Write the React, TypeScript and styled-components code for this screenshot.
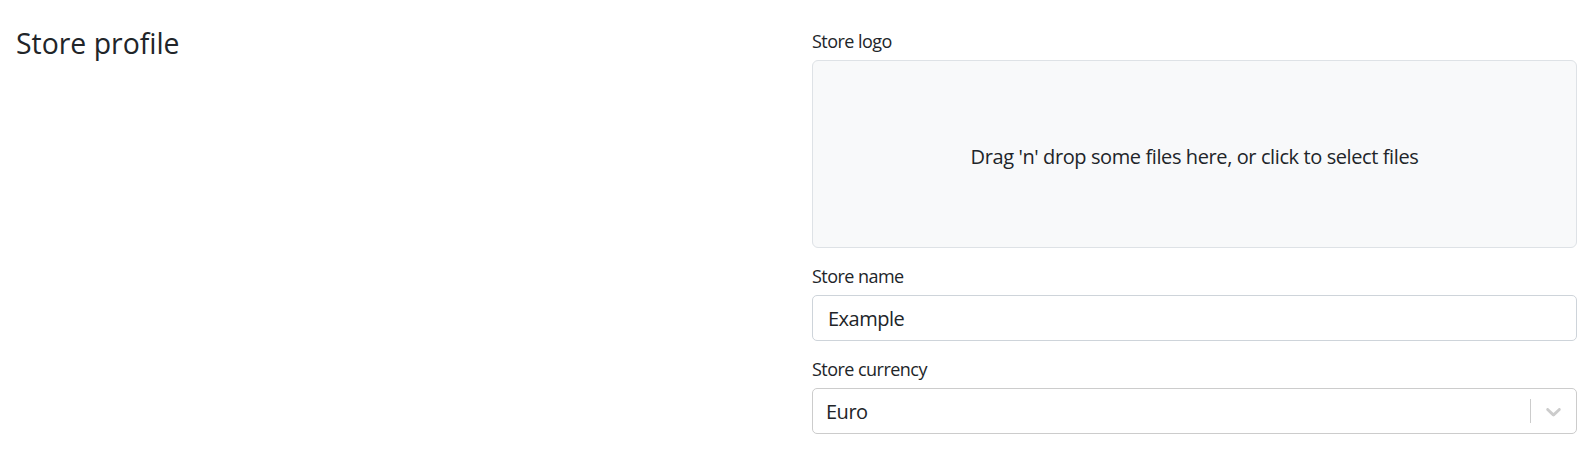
import React from "react";
import styled, { createGlobalStyle } from "styled-components";

const Global = createGlobalStyle`
  html, body { margin: 0; padding: 0; background: #fff; }
  body {
    font-family: "Open Sans", "Noto Sans", sans-serif;
    color: #212529;
    -webkit-font-smoothing: antialiased;
  }
`;

const Page = styled.div`
  display: grid;
  grid-template-columns: 1fr 1fr;
  column-gap: 31px;
  padding: 26px 10px 20px 16px;
`;

const Title = styled.h4`
  margin: 0;
  font-size: 28.4px;
  line-height: 34px;
  font-weight: 400;
`;

const Form = styled.div`
  display: flex;
  flex-direction: column;
  gap: 13px;
`;

const Group = styled.div`
  display: flex;
  flex-direction: column;
  gap: 4px;
`;

const Label = styled.label`
  font-size: 18px;
  line-height: 30px;
  letter-spacing: -0.03em;
`;

const Dropzone = styled.div`
  height: 188px;
  box-sizing: border-box;
  border: 1px solid #dee2e6;
  border-radius: 6px;
  background: #f8f9fa;
  display: flex;
  align-items: center;
  justify-content: center;
  font-size: 20px;
  letter-spacing: -0.02em;
  padding-top: 4px;
  cursor: pointer;
`;

const Input = styled.input`
  box-sizing: border-box;
  height: 46px;
  width: 100%;
  border: 1px solid #ced4da;
  border-radius: 5px;
  padding: 0 15px;
  font-family: inherit;
  font-size: 20px;
  letter-spacing: -0.025em;
  color: #212529;
  background: #fff;
  outline: none;
`;

const SelectControl = styled.div`
  box-sizing: border-box;
  height: 46px;
  border: 1px solid #cccccc;
  border-radius: 5px;
  display: flex;
  align-items: center;
  background: #fff;
`;

const SelectValue = styled.div`
  flex: 1;
  padding: 0 13px;
  font-size: 20px;
  letter-spacing: -0.025em;
  color: #212529;
`;

const Separator = styled.span`
  align-self: stretch;
  width: 1px;
  margin: 10px 0;
  background: #cccccc;
`;

const Indicator = styled.div`
  display: flex;
  padding: 10px;
  color: #cccccc;
`;

const Chevron = () => (
  <svg width="25" height="25" viewBox="0 0 20 20" fill="currentColor" aria-hidden="true">
    <path d="M4.516 7.548c0.436-0.446 1.043-0.481 1.576 0l3.908 3.747 3.908-3.747c0.533-0.481 1.141-0.446 1.574 0 0.436 0.445 0.408 1.197 0 1.615-0.406 0.418-4.695 4.502-4.695 4.502-0.217 0.223-0.502 0.335-0.787 0.335s-0.57-0.112-0.789-0.335c0 0-4.287-4.084-4.695-4.502s-0.436-1.17 0-1.615z" />
  </svg>
);

export default function App() {
  return (
    <>
      <Global />
      <Page>
        <Title>Store profile</Title>
        <Form>
          <Group>
            <Label>Store logo</Label>
            <Dropzone>Drag 'n' drop some files here, or click to select files</Dropzone>
          </Group>
          <Group>
            <Label>Store name</Label>
            <Input defaultValue="Example" />
          </Group>
          <Group>
            <Label>Store currency</Label>
            <SelectControl>
              <SelectValue>Euro</SelectValue>
              <Separator />
              <Indicator>
                <Chevron />
              </Indicator>
            </SelectControl>
          </Group>
        </Form>
      </Page>
    </>
  );
}
